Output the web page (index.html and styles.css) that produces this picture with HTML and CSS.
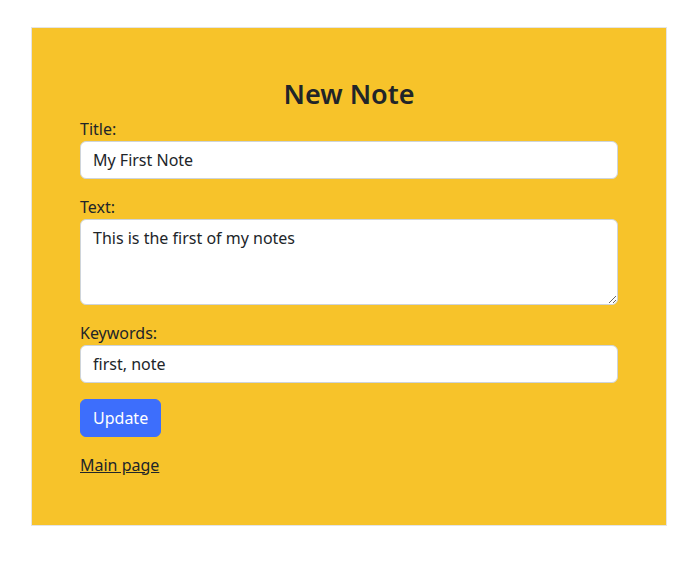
FILE: index.html
```html
<!DOCTYPE html>
<html lang="en">
<head>
<meta charset="utf-8">
<title>New Note</title>
<link rel="stylesheet" href="styles.css">
</head>
<body>
<div class="page">
  <div class="card">
    <h3 class="heading">New Note</h3>
    <form class="note-form">
      <div class="field">
        <label class="label" for="title">Title:</label>
        <input class="control" id="title" type="text" value="My First Note">
      </div>
      <div class="field">
        <label class="label" for="text">Text:</label>
        <textarea class="control area" id="text" rows="3">This is the first of my notes</textarea>
      </div>
      <div class="field">
        <label class="label" for="kw">Keywords:</label>
        <input class="control" id="kw" type="text" value="first, note">
      </div>
      <button class="btn" type="button">Update</button>
    </form>
    <p class="back"><a class="link" href="#">Main page</a></p>
  </div>
</div>
</body>
</html>
```
FILE: styles.css
```css
* { box-sizing: border-box; }
html, body { margin: 0; padding: 0; background: #fff; }
body {
  font-family: "Noto Sans", "Open Sans", sans-serif;
  font-size: 16px;
  line-height: 1.5;
  color: #212529;
}
.page { padding: 27px 0 0 31px; }
.card {
  width: 636px;
  background: #f7c32a;
  border: 1px solid #e4e4e4;
  padding: 47px 48px 32px 48px;
}
.heading {
  margin: 2px 0 6px 0;
  font-size: 27px;
  font-weight: 600;
  line-height: 1.25;
  text-align: center;
}
.note-form { margin: 0; }
.field { margin-bottom: 16px; display: flex; flex-direction: column; }
.label { display: block; margin-bottom: 0; }
.control {
  display: block;
  width: 100%;
  height: 38px;
  padding: 6px 12px;
  font: inherit;
  color: #212529;
  background: #fff;
  border: 1px solid #ced4da;
  border-radius: 6px;
}
.area { height: 86px; resize: vertical; }
.btn {
  display: inline-block;
  height: 38px;
  padding: 6px 12px;
  font: inherit;
  color: #fff;
  background: #3d6efc;
  border: 1px solid #3d6efc;
  border-radius: 6px;
}
.back { margin: 16px 0 16px 0; }
.link { color: #212529; text-decoration: underline; }
```
